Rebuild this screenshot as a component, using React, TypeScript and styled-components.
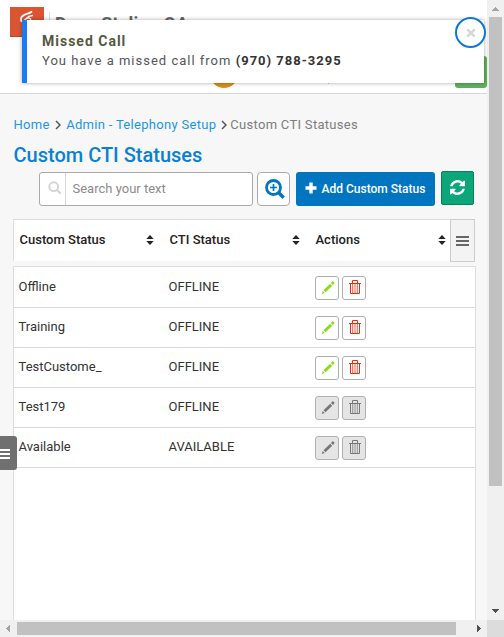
import React from 'react';
import styled, { createGlobalStyle, css } from 'styled-components';

const Global = createGlobalStyle`
  * { box-sizing: border-box; }
  html, body { margin: 0; overflow: hidden; }
  body { font-family: Roboto, "Liberation Sans", sans-serif; color: #333; background: #f7f7f7; }
  button, input { font-family: inherit; }
  button { padding: 0; }
  svg { display: block; }
`;

const Frame = styled.div`
  position: relative;
  width: 504px;
  height: 637px;
  display: grid;
  grid-template: 620px 17px / 487px 17px;
  overflow: hidden;
`;

const Page = styled.div`
  display: flex;
  flex-direction: column;
  overflow: hidden;
  background: #f7f7f7;
`;

const Header = styled.header`
  position: relative;
  flex: none;
  display: flex;
  height: 94px;
  padding: 7px 0 0 10px;
  background: #fff;
  border-bottom: 1px solid #d8d8d8;
`;

const Logo = styled.div`
  width: 34px;
  height: 30px;
  background: #dc5532;
  border-bottom: 1px solid #b5462b;
`;

const Org = styled.div`
  height: 30px;
  margin: 5px 0 0 5px;
  padding-left: 5px;
  border-left: 1px solid #ddd;
  color: #666;
  font-size: 18px;
  font-weight: 700;
  line-height: 23px;
  letter-spacing: 0.15px;
`;

const Avatar = styled.span`
  position: absolute;
  left: 210px;
  top: 60px;
  width: 28px;
  height: 28px;
  border-radius: 50%;
  background: #df8d14;
`;

const Tick = styled.span`
  position: absolute;
  left: 328px;
  top: 76px;
  width: 1px;
  height: 8px;
  background: #ccc;
`;

const CallButton = styled.button`
  position: absolute;
  left: 455px;
  top: 56px;
  width: 32px;
  height: 32px;
  border: 0;
  border-radius: 3px;
  background: #5cb25c;
`;

const Toast = styled.section`
  position: absolute;
  z-index: 2;
  left: 22px;
  top: 20px;
  width: 462px;
  height: 63px;
  padding: 12px 0 0 15px;
  border-left: 5px solid #1a7cf0;
  background: #fff;
  box-shadow: 0 0 4px rgba(0, 0, 0, 0.35);
  letter-spacing: 1px;
`;

const ToastTitle = styled.div`
  color: #55583f;
  font-size: 14px;
  font-weight: 700;
  line-height: 18px;
`;

const ToastText = styled.div`
  margin-top: 1px;
  color: #555;
  font-size: 13px;
  line-height: 20px;
  b { color: #333; font-weight: 700; }
`;

const Close = styled.button`
  position: absolute;
  right: -2px;
  top: -3px;
  width: 31px;
  height: 31px;
  display: grid;
  place-items: center;
  border: 2px solid #0d78d2;
  border-radius: 50%;
  background: #fff;
`;

const Crumbs = styled.nav`
  display: flex;
  align-items: center;
  height: 20px;
  margin: 21px 0 0 13.5px;
  font-size: 13px;
  letter-spacing: 0.3px;
  color: #7d7d7d;
  white-space: nowrap;
  a { color: #1b96e4; }
`;

const Separator = styled.svg<{ $tight?: boolean }>`
  flex: none;
  margin: 0 ${({ $tight }) => ($tight ? '3px 0 5px' : '5px 0 5.5px')};
`;

const Title = styled.h1`
  height: 26px;
  margin: 7px 0 0 13.5px;
  color: #0a80d2;
  font-size: 20px;
  font-weight: 500;
  line-height: 27px;
`;

const Toolbar = styled.div`
  display: flex;
  height: 35px;
  margin: 4px 0 0 39px;
`;

const Search = styled.label`
  display: flex;
  width: 214px;
  height: 34px;
  border: 1px solid #aaa;
  border-radius: 3px;
  background: #fff;
`;

const SearchIcon = styled.span`
  width: 26px;
  padding: 8px 0 0 8px;
  border-right: 1px solid #d6d6d6;
`;

const SearchInput = styled.input`
  width: 180px;
  padding: 0 6.5px;
  border: 0;
  outline: 0;
  background: transparent;
  font-size: 13px;
  &::placeholder { color: #8b8b8b; opacity: 1; }
`;

const ZoomButton = styled.button`
  width: 33px;
  height: 34px;
  margin-left: 4px;
  padding-left: 3px;
  display: grid;
  place-items: center;
  border: 1px solid #aaa;
  border-radius: 4px;
  background: #fff;
`;

const AddButton = styled.button`
  display: flex;
  align-items: center;
  width: 139px;
  height: 34px;
  margin-left: 6px;
  padding-left: 9px;
  border: 0;
  border-radius: 3px;
  background: #0275c1;
  color: #fff;
  font-size: 12px;
  font-weight: 500;
  white-space: nowrap;
  svg { flex: none; margin: -2px 4.5px 0 0; }
`;

const RefreshButton = styled.button`
  width: 33px;
  height: 34px;
  margin: -1px 0 0 6px;
  display: grid;
  place-items: center;
  border: 1px solid #088058;
  border-radius: 2px;
  background: #0ba67a;
`;

const TableHead = styled.div`
  display: grid;
  grid-template-columns: 151px 146px 140px 25px;
  width: 462px;
  height: 43px;
  margin: 13px 0 0 13px;
`;

const HeadCell = styled.div<{ $left: number; $right: number; $edge?: boolean }>`
  display: flex;
  align-items: center;
  justify-content: space-between;
  height: 42px;
  padding: 0 ${({ $right }) => $right}px 2px ${({ $left }) => $left}px;
  border-top: 1px solid #ddd;
  ${({ $edge }) => $edge && css`border-left: 1px solid #ddd;`}
  background: #fff;
  color: #222;
  font-size: 13px;
  font-weight: 500;
`;

const ColumnMenu = styled.button`
  display: grid;
  place-items: center;
  width: 25px;
  height: 43px;
  border: 1px solid #ccc;
  background: #f3f3f3;
`;

const TableBody = styled.div`
  width: 463px;
  height: 358px;
  margin: 4px 0 0 13px;
  border: 1px solid #ddd;
  border-bottom: 0;
  background: #fff;
`;

const Row = styled.div`
  display: grid;
  grid-template-columns: 150px 146.5px 1fr;
  height: 40px;
  padding-left: 4.5px;
  border-bottom: 1px solid #d9d9d9;
  font-size: 13px;
  line-height: 37px;
  &:first-child { height: 41px; line-height: 39px; }
`;

const Actions = styled.div`
  display: flex;
  gap: 3px;
  padding-top: 8px;
  ${Row}:first-child > & { padding-top: 9px; }
`;

const ActionButton = styled.button<{ $tone: string; $off: boolean }>`
  width: 24px;
  height: 24px;
  display: flex;
  align-items: flex-start;
  padding: 3px 0 0 5px;
  border: 1px solid #b0b0b0;
  border-radius: 3px;
  background: ${({ $off }) => ($off ? '#e5e5e5' : '#fff')};
  color: ${({ $tone }) => $tone};
`;

const SideTab = styled.button`
  position: absolute;
  z-index: 1;
  left: -6px;
  top: 436px;
  width: 23px;
  height: 34px;
  padding: 1px 0 0 6px;
  border: 0;
  border-radius: 3px;
  background: #707070;
`;

const Track = styled.div<{ $vertical?: boolean }>`
  display: flex;
  flex-direction: ${({ $vertical }) => ($vertical ? 'column' : 'row')};
  justify-content: space-between;
  background: #f0f0f0;
`;

const Thumb = styled.div<{ $vertical?: boolean }>`
  background: #c1c1c1;
  ${({ $vertical }) => $vertical
    ? css`width: 13px; height: 469px; margin: 0 2px auto;`
    : css`height: 13px; width: 439px; margin: 2px auto 2px 0;`}
`;

const Corner = styled.div`background: #dcdcdc;`;

const Arrow = ({ d, color = '#505050' }: { d: string; color?: string }) => (
  <svg width="17" height="17" viewBox="0 0 17 17" shapeRendering="crispEdges"><path d={d} fill={color} /></svg>
);

const Bars = ({ color, width, gap }: { color: string; width: number; gap: number }) => (
  <svg width={width} height={gap * 2 + 2} shapeRendering="crispEdges">
    {[0, 1, 2].map((i) => <rect key={i} y={i * gap} width={width} height="2" fill={color} />)}
  </svg>
);

const Chevron = ({ tight }: { tight?: boolean }) => (
  <Separator $tight={tight} width="6" height="10" viewBox="0 0 6 10">
    <path d="M1 1l4 4-4 4" fill="none" stroke="#555" strokeWidth="1.5" />
  </Separator>
);

const Sort = () => (
  <svg width="8" height="10" viewBox="0 0 8 10"><path d="M4 0L7.7 4H.3zM.3 6h7.4L4 10z" fill="#222" /></svg>
);

const Pencil = () => (
  <svg width="14" height="15" viewBox="-.5 -1 14 15" fill="currentColor">
    <path d="M.2 13L1.2 10 3.200 12zM2 9.200L8.700 2.700 10.700 4.700 4 11.300zM9.400 2L10.800.6Q11.400 0 12 .6L12.800 1.400Q13.300 2 12.800 2.600L11.500 4z" />
  </svg>
);

const Trash = () => (
  <svg width="13" height="14" viewBox="-1 0 13 14" fill="none" stroke="currentColor">
    <path d="M0 3.500h12M3.500 3V.5h5V3M1.500 4v9.500h9V4" />
    <path d="M3.700 4v9M6 4v9M8.300 4v9" strokeWidth="0.900" strokeOpacity="0.850" />
  </svg>
);

const rows = [
  { name: 'Offline', cti: 'OFFLINE', editable: true },
  { name: 'Training', cti: 'OFFLINE', editable: true },
  { name: 'TestCustome_', cti: 'OFFLINE', editable: true },
  { name: 'Test179', cti: 'OFFLINE', editable: false },
  { name: 'Available', cti: 'AVAILABLE', editable: false },
];

export default function App() {
  return (
    <Frame>
      <Global />
      <Page>
        <Header>
          <Logo>
            <svg width="34" height="29" viewBox="0 0 34 29" fill="none" stroke="#fff" strokeLinecap="round">
              <path d="M21.500 4.700C18 7.500 12 7 11 11.500C10.500 14.500 12.500 15 14 14" strokeWidth="1.800" />
              <path d="M22.500 8.500C18 9 13 12.500 14 18M14.500 13C18 9.500 22 11 20.500 15S16 20 15 23" strokeWidth="1.300" />
            </svg>
          </Logo>
          <Org>Dean Stalion QA</Org>
          <Avatar />
          <Tick />
          <CallButton aria-label="Call" />
        </Header>
        <Crumbs>
          <a>Home</a><Chevron /><a>Admin - Telephony Setup</a><Chevron tight /><span>Custom CTI Statuses</span>
        </Crumbs>
        <Title>Custom CTI Statuses</Title>
        <Toolbar>
          <Search>
            <SearchIcon>
              <svg width="14" height="14" viewBox="0 0 14 14" fill="none" stroke="#d4d4d4" strokeWidth="2">
                <circle cx="5.7" cy="5.7" r="4.4" /><path d="M9 9l3.7 3.7" />
              </svg>
            </SearchIcon>
            <SearchInput placeholder="Search your text" />
          </Search>
          <ZoomButton aria-label="Advanced search">
            <svg width="20" height="20" viewBox="0 0 20 20" fill="none" stroke="#0275c1">
              <circle cx="8.500" cy="8.500" r="7" strokeWidth="2.800" />
              <path d="M13.500 13.500l5.200 5.200" strokeWidth="3.400" /><path d="M8.500 5v7M5 8.500h7" strokeWidth="1.700" />
            </svg>
          </ZoomButton>
          <AddButton>
            <svg width="12" height="12" viewBox="0 0 12 12"><path d="M4.3.5h3.4v3.8h3.800v3.400H7.700v3.800H4.300V7.700H.5V4.300h3.800z" fill="#fff" /></svg>
            Add Custom Status
          </AddButton>
          <RefreshButton aria-label="Refresh">
            <svg width="15" height="15" viewBox="0 0 1536 1536" fill="#fff">
              <path d="M1511 928q0 5-1 7-64 268-268 434.500T764 1536q-146 0-282.500-55T238 1324l-129 129q-19 19-45 19t-45-19-19-45V960q0-26 19-45t45-19h448q26 0 45 19t19 45-19 45l-137 137q71 66 161 102t187 36q134 0 250-65t186-179q11-17 53-117 8-23 30-23h192q13 0 22.500 9.500t9.500 22.500zm25-800v448q0 26-19 45t-45 19h-448q-26 0-45-19t-19-45 19-45l138-138Q969 256 768 256q-134 0-250 65T332 500q-11 17-53 117-8 23-30 23H50q-13 0-22.500-9.500T18 608v-7q65-268 270-434.500T768 0q146 0 284 55.500T1297 212l130-129q19-19 45-19t45 19 19 45z" />
            </svg>
          </RefreshButton>
        </Toolbar>
        <TableHead>
          <HeadCell $left={5.5} $right={10} $edge>Custom Status<Sort /></HeadCell>
          <HeadCell $left={5.5} $right={10}>CTI Status<Sort /></HeadCell>
          <HeadCell $left={5.5} $right={4}>Actions<Sort /></HeadCell>
          <ColumnMenu aria-label="Columns"><Bars color="#666" width={13} gap={4} /></ColumnMenu>
        </TableHead>
        <TableBody>
          {rows.map(({ name, cti, editable }) => (
            <Row key={name}>
              <span>{name}</span>
              <span>{cti}</span>
              <Actions>
                <ActionButton aria-label="Edit" $off={!editable} $tone={editable ? '#87dc14' : '#777'}><Pencil /></ActionButton>
                <ActionButton aria-label="Delete" $off={!editable} $tone={editable ? '#e62a14' : '#777'}><Trash /></ActionButton>
              </Actions>
            </Row>
          ))}
        </TableBody>
      </Page>
      <Track $vertical>
        <Arrow d="M5 11h7L8.500 7z" color="#a3a3a3" />
        <Thumb $vertical />
        <Arrow d="M5 6h7L8.500 10z" />
      </Track>
      <Track>
        <Arrow d="M10 5v7L6 8.500z" color="#a3a3a3" />
        <Thumb />
        <Arrow d="M7 5v7l4-3.500z" />
      </Track>
      <Corner />
      <SideTab aria-label="Menu"><Bars color="#fff" width={10} gap={4} /></SideTab>
      <Toast>
        <ToastTitle>Missed Call</ToastTitle>
        <ToastText>You have a missed call from <b>(970) 788-3295</b></ToastText>
        <Close aria-label="Close">
          <svg width="10" height="10" viewBox="0 0 10 10"><path d="M1.300 1.300l7.400 7.400M8.700 1.300L1.300 8.700" stroke="#d8d8d8" strokeWidth="2.600" /></svg>
        </Close>
      </Toast>
    </Frame>
  );
}
